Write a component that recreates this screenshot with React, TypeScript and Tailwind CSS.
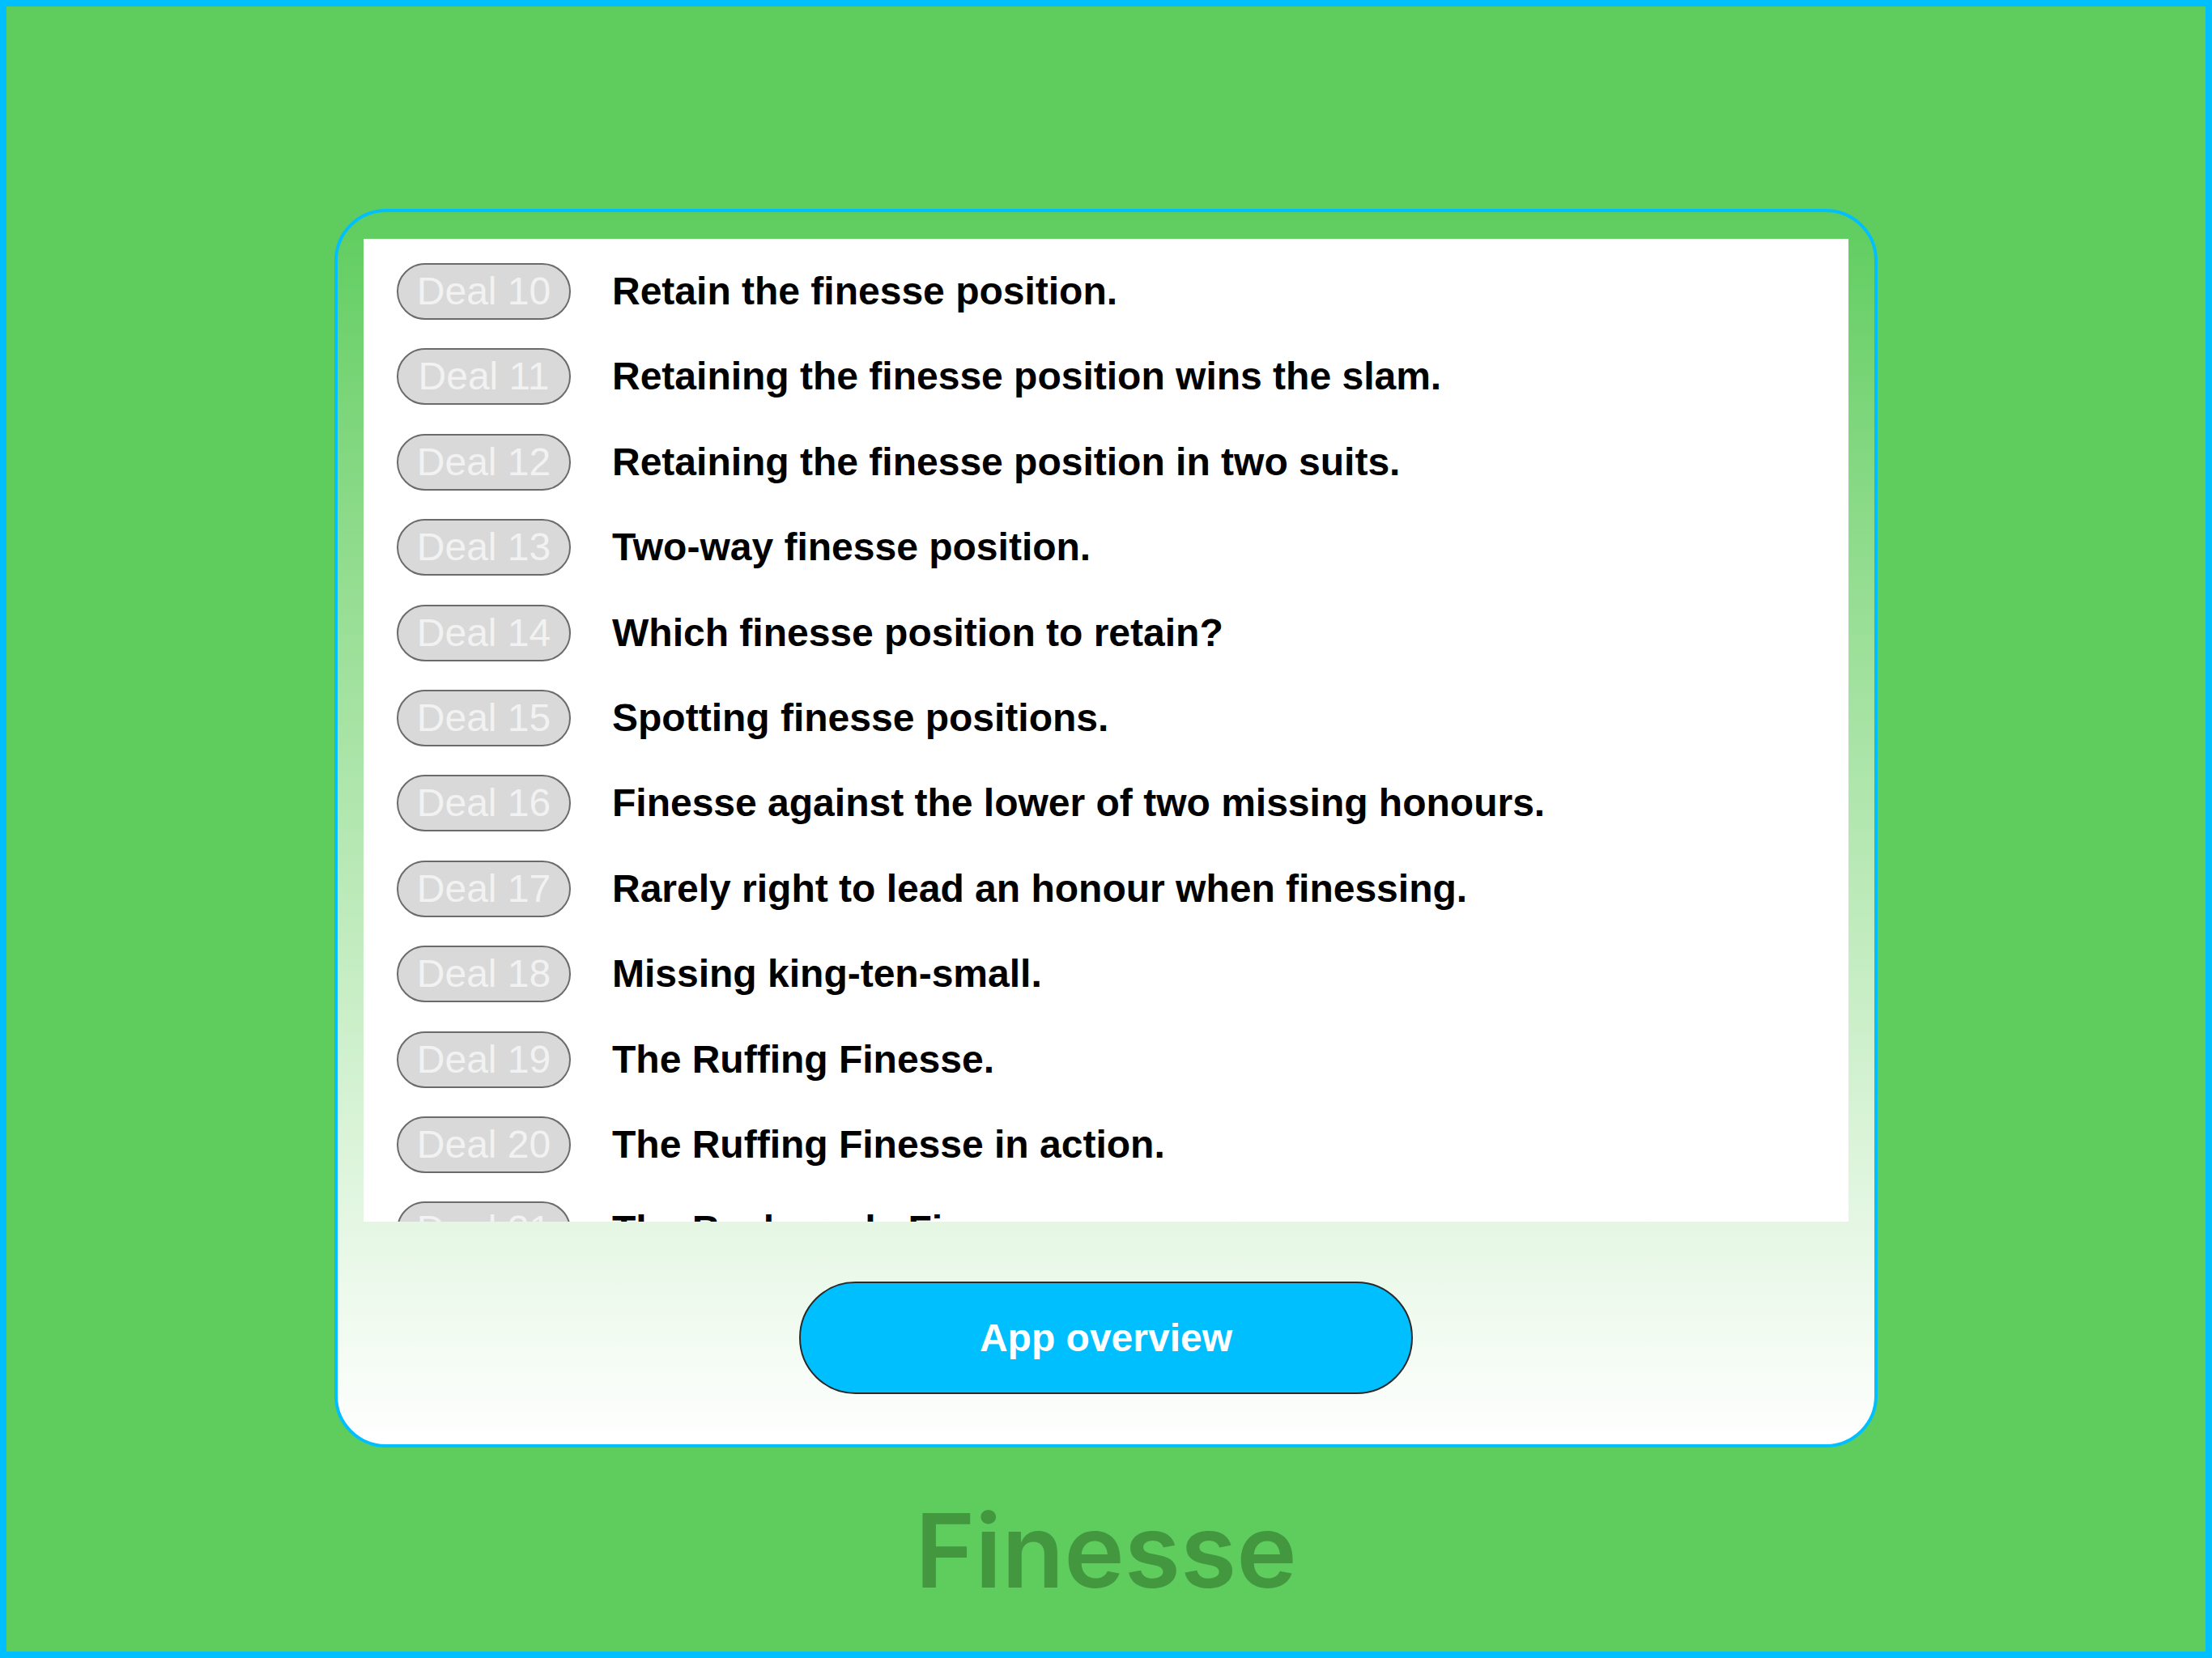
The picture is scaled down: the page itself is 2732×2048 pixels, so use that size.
import React from "react";

interface Deal {
  id: number;
  title: string;
}

const deals: Deal[] = [
  { id: 10, title: "Retain the finesse position." },
  { id: 11, title: "Retaining the finesse position wins the slam." },
  { id: 12, title: "Retaining the finesse position in two suits." },
  { id: 13, title: "Two-way finesse position." },
  { id: 14, title: "Which finesse position to retain?" },
  { id: 15, title: "Spotting finesse positions." },
  { id: 16, title: "Finesse against the lower of two missing honours." },
  { id: 17, title: "Rarely right to lead an honour when finessing." },
  { id: 18, title: "Missing king-ten-small." },
  { id: 19, title: "The Ruffing Finesse." },
  { id: 20, title: "The Ruffing Finesse in action." },
  { id: 21, title: "The Backwards Finesse." },
  { id: 22, title: "The Backwards Finesse in action." },
];

const DealRow: React.FC<{ deal: Deal }> = ({ deal }) => (
  <div className="flex items-center h-[70px] shrink-0">
    <div className="w-[215px] h-[70px] shrink-0 rounded-full border-2 border-[#6b6b6b] bg-[#d9d9d9] flex items-center justify-center text-[48px] leading-none text-[#f2f2f2] font-['Liberation_Sans',Arial,sans-serif]">
      Deal {deal.id}
    </div>
    <div className="ml-[51px] text-[48px] leading-none font-bold text-black font-['Liberation_Sans',Arial,sans-serif] whitespace-nowrap">
      {deal.title}
    </div>
  </div>
);

export default function App() {
  return (
    <div className="w-[2732px] h-[2048px] border-[8px] border-[#00bfff] bg-[#5ecd5e] flex flex-col items-center pt-[250px] overflow-hidden">
      <div className="w-[1906px] h-[1530px] shrink-0 rounded-[64px] border-4 border-[#00bfff] bg-linear-to-b from-[#5ecd5e] to-white flex flex-col px-[32px] pt-[33px]">
        {/* list of deals, clipped like a scroll view */}
        <div className="h-[1214px] bg-white overflow-hidden pt-[30px] pl-[41px] flex flex-col gap-[35.4px]">
          {deals.map((deal) => (
            <DealRow key={deal.id} deal={deal} />
          ))}
        </div>
        <div className="flex justify-center mt-[74px]">
          <button className="w-[758px] h-[139px] rounded-full border-2 border-[#2a2a2a] bg-[#00bfff] text-white text-[48px] font-bold font-['Liberation_Sans',Arial,sans-serif]">
            App overview
          </button>
        </div>
      </div>
      <div className="mt-[64px] text-[126px] leading-none font-semibold text-[#43983f] font-['Inter','Noto_Sans',sans-serif]">
        Finesse
      </div>
    </div>
  );
}
